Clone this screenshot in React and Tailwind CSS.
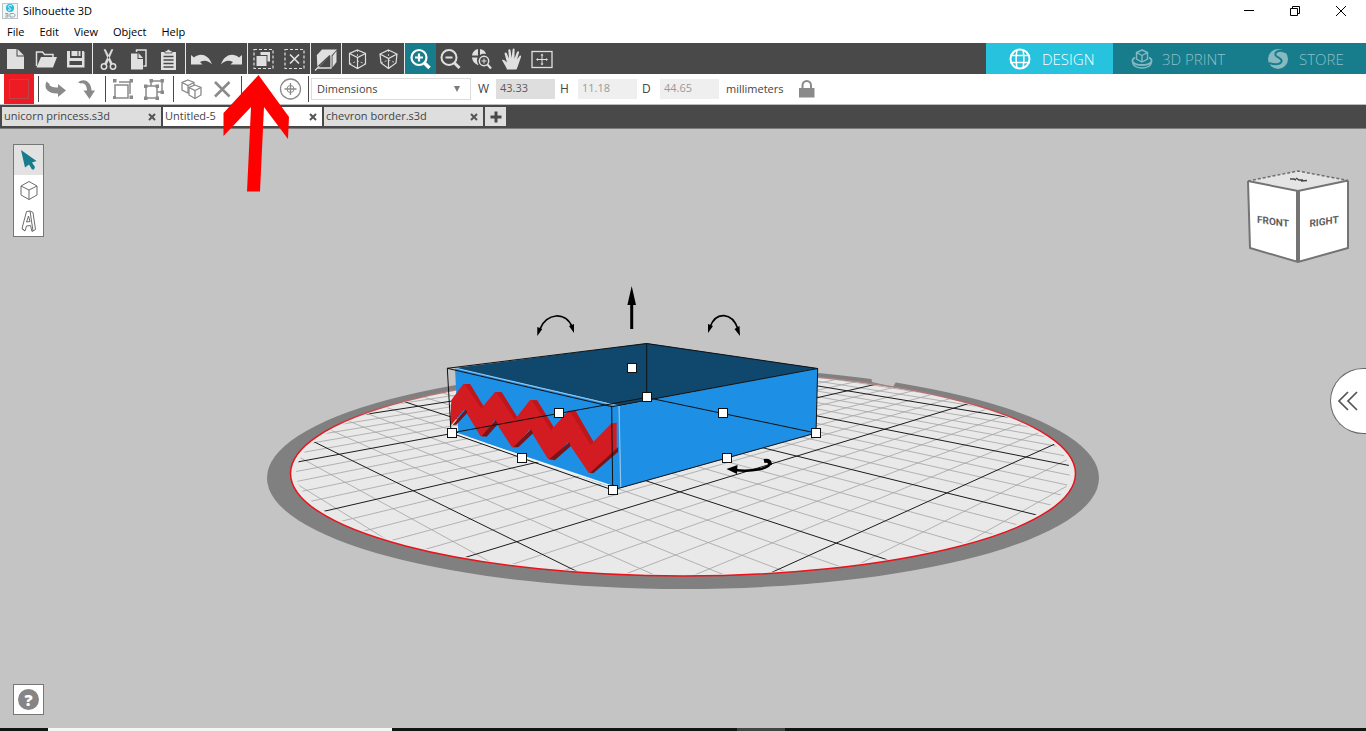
import { useState } from "react";

const LIGHT = "#e0e0e0";
const GREY = "#8a8a8a";

function Icon({ children, color = LIGHT, width = 1 }) {
  return (
    <svg
      viewBox="0 0 31 30"
      className="h-[30px] w-[31px] shrink-0"
      fill="none"
      stroke={color}
      strokeWidth={width}
      aria-hidden="true"
    >
      {children}
    </svg>
  );
}

function NewIcon() {
  return (
    <Icon>
      <path d="M7 5h9.500v7.500H24V25H7z" fill={LIGHT} stroke="none" />
      <path d="M17.500 5l6.500 6.500h-6.500z" fill={LIGHT} stroke="none" />
    </Icon>
  );
}

function OpenIcon() {
  return (
    <Icon>
      <path d="M5.500 22V8h6l2 2.500H22V13" strokeWidth="1.500" />
      <path d="M10 13h16l-4 10.500H5.500z" fill={LIGHT} stroke="none" />
    </Icon>
  );
}

function SaveIcon() {
  return (
    <Icon>
      <path
        d="M6 7h3v7h12V7h1.500L23.500 8v15.500H6zM8.500 17v4h12.500v-4z"
        fill={LIGHT}
        stroke="none"
        fillRule="evenodd"
      />
      <path d="M10.500 7h6v5h-6z" fill={LIGHT} stroke="none" />
      <path d="M17.500 7h2v5h-2z" fill={LIGHT} stroke="none" />
    </Icon>
  );
}

function CutIcon() {
  return (
    <Icon>
      <path d="M11 5.500l1.500 0 7 14-2 1zM20 5.500l-1.500 0-7 14 2 1z" fill={LIGHT} stroke={LIGHT} strokeWidth=".5" />
      <circle cx="11" cy="22.500" r="2.700" strokeWidth="1.500" />
      <circle cx="20" cy="22.500" r="2.700" strokeWidth="1.500" />
    </Icon>
  );
}

function CopyIcon() {
  return (
    <Icon>
      <path d="M12.500 8V6H22v16h-2.500" strokeWidth="1.500" />
      <path d="M7 9.500h6.500V15H19v10.500H7z" fill={LIGHT} stroke="none" />
      <path d="M14.500 9l4.500 5h-4.500z" fill={LIGHT} stroke="none" />
    </Icon>
  );
}

function PasteIcon() {
  return (
    <Icon>
      <path d="M7 8h15v18H7z" fill={LIGHT} stroke="none" />
      <path d="M11 9V6.500h2L14.500 5l1.500 1.500h2V9z" fill={LIGHT} stroke="#494949" strokeWidth=".8" />
      <path d="M9.500 12.500h10M9.500 16h10M9.500 19.500h10M9.500 23h10" stroke="#494949" strokeWidth="1.300" />
    </Icon>
  );
}

function UndoIcon() {
  return (
    <Icon>
      <path d="M5 20.500V11l3 2.500c6-5.500 15-3 18 7-4-4.500-8-4.500-12-2.500l2.500 2.500z" fill={LIGHT} stroke="none" />
    </Icon>
  );
}

function RedoIcon() {
  return (
    <Icon>
      <path d="M26 20.500V11l-3 2.500c-6-5.500-15-3-18 7 4-4.500 8-4.500 12-2.500l-2.500 2.500z" fill={LIGHT} stroke="none" />
    </Icon>
  );
}

function SelectAllIcon() {
  return (
    <Icon>
      <rect x="6" y="5.500" width="19" height="19" strokeDasharray="3 2" strokeWidth="1.200" />
      <path d="M13 8h9v9h-2v-7h-7z" fill={LIGHT} stroke="none" />
      <path d="M12.500 8H22v9.500h-2.500V11h-7z" fill={LIGHT} stroke="none" />
      <path d="M8.500 12h10v10h-10z" fill={LIGHT} stroke="none" />
    </Icon>
  );
}

function DeselectIcon() {
  return (
    <Icon>
      <rect x="6" y="5.500" width="19" height="19" strokeDasharray="3 2" strokeWidth="1.200" />
      <path d="M11 10.500l9 9M20 10.500l-9 9" strokeWidth="1.700" />
    </Icon>
  );
}

function SectionIcon() {
  return (
    <Icon>
      <path d="M6 11l5-5.500h15l-5 5.500z" fill={LIGHT} stroke="none" />
      <path d="M6.500 11.500H20V24H7z" strokeWidth="1.300" />
      <path d="M7 24V12h12z" fill={LIGHT} stroke="none" />
      <path d="M21.500 12L25.500 7v11l-4 5.500z" fill={LIGHT} stroke="none" />
      <path d="M3.500 26L19 11.500" stroke="#494949" strokeWidth="1.500" />
      <path d="M4 26.500l4-4" strokeWidth="1.300" />
    </Icon>
  );
}

function WireCubeIcon() {
  return (
    <Icon width={1.2}>
      <path d="M15.500 6l8 3.500v10.500l-8 4.500-8-4.500V9.500zM7.500 9.500l8 4 8-4M15.500 13.500v11" />
      <path d="M15.500 6v11M7.500 20l8-3 8 3" strokeDasharray="2 2" strokeWidth=".8" />
    </Icon>
  );
}

function PerspectiveCubeIcon() {
  return (
    <Icon width={1.2}>
      <path d="M15.500 6l8.500 4-1 9-7.500 5.500L8 19 7 10zM7 10l8.500 4.500L24 10M15.500 14.500v10" />
      <path d="M15.500 6v10M8 19l7.500-3 7.500 3" strokeDasharray="2 2" strokeWidth=".8" />
    </Icon>
  );
}

function ZoomInIcon() {
  return (
    <Icon color="#ffffff">
      <circle cx="14" cy="13.500" r="7.500" strokeWidth="2.200" />
      <path d="M14 9.500v8M10 13.500h8" strokeWidth="2.200" />
      <path d="M19.500 19l5 5" strokeWidth="3.500" />
    </Icon>
  );
}

function ZoomOutIcon() {
  return (
    <Icon>
      <circle cx="14" cy="13.500" r="7.500" strokeWidth="2" />
      <path d="M10.500 13.500h7" strokeWidth="2" />
      <path d="M19.500 19l5 5" strokeWidth="3" />
    </Icon>
  );
}

function ZoomAreaIcon() {
  return (
    <Icon>
      <path
        d="M12 5v6.500H6c.5-3.500 2.500-6 6-6.500zM14 5c3.500.5 5.500 2.500 6 5-2-.7-4.500-.3-6 1zM6 13.500h5.500c-1 2.500-.5 5 1 7.500-3.500-.7-6-3.500-6.500-7.500z"
        fill={LIGHT}
        stroke="none"
      />
      <circle cx="18" cy="17" r="4.700" strokeWidth="1.500" />
      <path d="M15.500 17h5M18 14.500v5" />
      <path d="M21.500 20.500l3.500 4" strokeWidth="2.200" />
    </Icon>
  );
}

function HandIcon() {
  return (
    <Icon>
      <path
        d="M10 25.500c-1-3.500-4-7-5-9.500 1.500-1 3 .5 5 2.500L7.500 9.500c.5-1.500 2-1.300 2.300 0l2.200 5-.7-8c.2-1.700 2-1.700 2.300 0l1 7.500 1-8.500c.3-1.500 2-1.300 2 0L17.500 14.500 20 8c.8-1.300 2.200-.8 2 .7l-2 6.800 2.500-3.500c1-1 2-.2 1.500 1-1.500 4-3 9-4.500 12.500z"
        fill={LIGHT}
        stroke="none"
      />
    </Icon>
  );
}

function FitIcon() {
  return (
    <Icon>
      <rect x="5" y="7.500" width="20" height="16" strokeWidth="1.300" />
      <path d="M10 15.500h10M15 10.500v10" strokeWidth="1" />
      <path d="M9 15.500l2-1.500v3zM21 15.500l-2-1.500v3zM15 9.500l-1.500 2h3zM15 21.500l-1.500-2h3z" fill={LIGHT} stroke="none" />
    </Icon>
  );
}

const toolGroups = [
  {
    width: "w-[92px]",
    tools: [["New", NewIcon], ["Open", OpenIcon], ["Save", SaveIcon]],
  },
  {
    width: "w-[93px]",
    tools: [["Cut", CutIcon], ["Copy", CopyIcon], ["Paste", PasteIcon]],
  },
  { width: "w-[62px]", tools: [["Undo", UndoIcon], ["Redo", RedoIcon]] },
  {
    width: "w-[63px]",
    tools: [["Select all", SelectAllIcon], ["Deselect", DeselectIcon]],
  },
  { width: "w-[31px]", tools: [["Section view", SectionIcon]] },
  {
    width: "w-[63px]",
    tools: [["Wireframe", WireCubeIcon], ["Perspective", PerspectiveCubeIcon]],
  },
  {
    width: "w-[154px]",
    tools: [
      ["Zoom in", ZoomInIcon],
      ["Zoom out", ZoomOutIcon],
      ["Zoom area", ZoomAreaIcon],
      ["Pan", HandIcon],
      ["Fit to window", FitIcon],
    ],
  },
];

function TitleBar() {
  return (
    <header className="flex h-[22px] items-center pr-[2px] pl-[2px] text-black">
      <svg viewBox="0 0 16 16" className="size-4" aria-hidden="true">
        <rect x=".5" y=".5" width="15" height="15" fill="#f2f6f7" stroke="#b9c4c8" />
        <circle cx="8" cy="5" r="4" fill="#25bcd8" />
        <path d="M10 3c-3-1.500-5 .5-2.500 2s1 2.500-1.500 2" stroke="#fff" fill="none" />
        <path d="M3 10.500h3v3.500H3M3.500 12.200H6M8 10.500h3.500l1.500 1v1.500l-1.500 1H8z" stroke="#9aa3a6" fill="none" />
      </svg>
      <h1 className="ml-[5px] flex-1 text-[11px]">Silhouette 3D</h1>
      <button aria-label="Minimize" className="flex h-full w-[46px] items-center justify-center">
        <svg viewBox="0 0 10 10" className="size-[10px]" stroke="#000">
          <path d="M0 4.500h10" />
        </svg>
      </button>
      <button aria-label="Restore" className="flex h-full w-[46px] items-center justify-center">
        <svg viewBox="0 0 10 10" className="size-[10px]" stroke="#000" fill="none">
          <path d="M.5 2.500h7v7h-7zM2.500 2.500v-2h7v7h-2" />
        </svg>
      </button>
      <button aria-label="Close" className="flex h-full w-[46px] items-center justify-center">
        <svg viewBox="0 0 10 10" className="size-[10px]" stroke="#000">
          <path d="M0 0l10 10M10 0L0 10" />
        </svg>
      </button>
    </header>
  );
}

function MenuBar() {
  return (
    <nav className="flex h-[21px] items-center gap-[15px] pl-[7px] text-[11px] text-black">
      {["File", "Edit", "View", "Object", "Help"].map((item) => (
        <button key={item}>{item}</button>
      ))}
    </nav>
  );
}

function ModeTabs() {
  return (
    <div className="flex text-[15px] text-[#8fbfc6]">
      <button className="flex w-[127px] items-center bg-[#26c2de] pt-px pl-[22px] text-white">
        <svg viewBox="0 0 24 24" className="mr-[10px] size-6" fill="none" stroke="#fff" aria-hidden="true">
          <circle cx="12" cy="12" r="9.500" strokeWidth="2" />
          <path d="M2.500 8.500h19M2.500 15.500h19M9 3c-1.200 6-1.200 12 0 18M15 3c1.200 6 1.200 12 0 18" strokeWidth="1.500" />
        </svg>
        <span className="font-light">DESIGN</span>
      </button>
      <button className="flex w-[134px] items-center bg-[#177d8c] pt-px pl-[17px]">
        <svg viewBox="0 0 24 24" className="mr-[8px] size-6" fill="none" stroke="#86b9c0" aria-hidden="true">
          <path d="M12 3l5.500 2.500v6.500L12 15l-5.500-3V5.500zM6.500 5.500l5.500 3 5.500-3M12 8.500V15" strokeWidth="1.400" />
          <path d="M5 10.500C-.5 13.500 3 18 12 18s12.500-4.500 7-7.500" strokeWidth="1.800" />
          <path d="M2.500 16c1.500 3.500 5 5 9.500 5s8-1.500 9.500-5" strokeWidth="1.500" />
        </svg>
        <span className="font-light">3D PRINT</span>
      </button>
      <button className="flex w-[119px] items-center bg-[#177d8c] pt-px pl-[19px]">
        <svg viewBox="0 0 24 24" className="mr-[9px] size-6" fill="none" aria-hidden="true">
          <circle cx="12" cy="12" r="10" fill="#86b9c0" />
          <path d="M20 5.500C15 2 8.500 4 9.500 8c1 3 7 2.500 6 6.500-1 3-6.500 3.500-12.500 1.500" stroke="#177d8c" strokeWidth="2" />
        </svg>
        <span className="font-light">STORE</span>
      </button>
    </div>
  );
}

function Toolbar() {
  return (
    <div className="flex h-[31px] items-stretch bg-[#494949]">
      {toolGroups.map((group, i) => (
        <div
          key={i}
          className={`flex shrink-0 ${group.width} ${i > 0 ? "border-l border-[#e8e8e8]" : ""}`}
        >
          {group.tools.map(([label, ToolIcon]) => (
            <button
              key={label}
              aria-label={label}
              className={`flex min-w-0 flex-1 items-center justify-center ${
                label === "Zoom in" ? "bg-[#177d8c]" : ""
              }`}
            >
              <ToolIcon />
            </button>
          ))}
        </div>
      ))}
      <div className="flex-1" />
      <ModeTabs />
    </div>
  );
}

function Separator() {
  return <span className="h-[26px] w-px shrink-0 bg-[#494949]" />;
}

function DimensionField({ label, value, disabled }) {
  return (
    <label className="flex items-center gap-2">
      <span className="w-[10px] text-xs">{label}</span>
      <input
        defaultValue={value}
        disabled={disabled}
        className={`h-5 w-[59px] pb-1 pl-1 ${
          disabled ? "bg-[#efefef] text-[#9a9a9a]" : "bg-[#dedede] text-[#5a5a5a]"
        }`}
      />
    </label>
  );
}

function OptionsBar() {
  return (
    <div className="flex h-[30px] items-center bg-white text-[11px] text-[#444]">
      <button aria-label="Fill color" className="ml-1 flex size-[30px] items-center justify-center bg-[#ed1c24]">
        <span className="size-[20px] border border-[#b3474c]" />
      </button>
      <div className="ml-1 flex w-[67px] items-center">
        <Separator />
        <button aria-label="Rotate horizontally" className="ml-px">
          <Icon color={GREY}>
            <path d="M6.500 7.500l3 2.500c-.5 2 3 3.500 8.500 3.500V10l8 6.500-8 6.500v-3.500C9 20 3 15 6.500 7.500z" fill={GREY} stroke="none" />
          </Icon>
        </button>
        <button aria-label="Rotate vertically">
          <Icon color={GREY}>
            <path d="M7 8.500C13 3 20.500 8 20.500 16.500H24L18.500 25 12.500 16.500H16c0-5-3-8.500-6-7z" fill={GREY} stroke="none" />
          </Icon>
        </button>
      </div>
      <div className="flex w-[68px] items-center">
        <Separator />
        <button aria-label="Group" className="ml-[2px]">
          <Icon color={GREY}>
            <path d="M7 11v13h13V11zM11 8h11v12" strokeWidth="1.500" />
            <path d="M5 5h3.500v3.500H5zM21.500 5H25v3.500h-3.500zM21.500 21.500H25V25h-3.500zM5 22h3v3H5z" fill={GREY} stroke="none" />
          </Icon>
        </button>
        <button aria-label="Ungroup">
          <Icon color={GREY}>
            <path d="M7 12v12h11V12zM12 12V7h11v11h-5" strokeWidth="1.500" />
            <path
              d="M5 10.500h3.500V14H5zM16.500 10.500H20V14h-3.500zM5 22.500h3.500V26H5zM16.500 22.500H20V26h-3.500zM10.500 5H14v3.500h-3.500zM21.500 5H25v3.500h-3.500zM21.500 16.500H25V20h-3.500z"
              fill={GREY}
              stroke="none"
            />
          </Icon>
        </button>
      </div>
      <div className="flex w-[68px] items-center">
        <Separator />
        <button aria-label="Duplicate" className="ml-[2px]">
          <Icon color={GREY} width={1.3}>
            <path d="M12 6l6 2.500v7.500l-6 3-6-3V8.500zM6 8.500l6 3 6-3M12 11.500V19" />
            <path d="M19 11l6 2.500V21l-6 3.500-6-3.500v-7.500z" fill="#fff" />
            <path d="M13 13.500l6 3 6-3M19 16.500v8" />
          </Icon>
        </button>
        <button aria-label="Delete">
          <Icon color={GREY}>
            <path d="M8 8l14.500 14.500M22.500 8L8 22.500" strokeWidth="2.500" />
          </Icon>
        </button>
      </div>
      <div className="flex w-[67px] items-center justify-between">
        <Separator />
        <button aria-label="Center on platform" className="mr-[2px]">
          <Icon color={GREY}>
            <circle cx="15.500" cy="15" r="10" strokeWidth="1.300" />
            <circle cx="15.500" cy="15" r="3.500" strokeWidth="1" />
            <path d="M15.500 9v12M9.500 15h12" strokeWidth="1.300" />
          </Icon>
        </button>
      </div>
      <Separator />
      <div className="relative ml-[2px]">
        <select
          aria-label="Transform mode"
          className="block h-[22px] w-[160px] appearance-none border border-[#dcdcdc] bg-white pt-px pl-[5px] text-[#444]"
        >
          <option>Dimensions</option>
        </select>
        <svg viewBox="0 0 8 8" className="pointer-events-none absolute top-[7px] right-[10px] size-2" aria-hidden="true">
          <path d="M1 1h6L4 7z" fill="#7a7a7a" />
        </svg>
      </div>
      <div className="ml-[7px] flex gap-[5px]">
        <DimensionField label="W" value="43.33" />
        <DimensionField label="H" value="11.18" disabled />
        <DimensionField label="D" value="44.65" disabled />
      </div>
      <span className="ml-[7px]">millimeters</span>
      <button aria-label="Lock aspect ratio" className="ml-[14px]">
        <svg viewBox="0 0 18 20" className="h-5 w-[18px]" aria-hidden="true">
          <path d="M4.500 9V6.500a4.200 4.500 0 0 1 8.500 0V9" fill="none" stroke={GREY} strokeWidth="2" />
          <path d="M1 9h15.500v9.500H1z" fill={GREY} />
        </svg>
      </button>
    </div>
  );
}

const documents = ["unicorn princess.s3d", "Untitled-5", "chevron border.s3d"];

function DocumentTabs({ active, onSelect }) {
  return (
    <div className="flex h-[25px] items-center gap-[2px] border-t border-b border-t-[#bdbdbd] border-b-[#7d7d7d] bg-[#494949] pl-[2px] text-[11px] text-[#444]">
      {documents.map((name) => (
        <div
          key={name}
          className={`flex h-[19px] w-[159px] items-center pr-[5px] pl-[2px] ${
            name === active ? "bg-white" : "bg-[#dedede]"
          }`}
        >
          <button className="flex-1 text-left" onClick={() => onSelect(name)}>
            {name}
          </button>
          <button aria-label={`Close ${name}`}>
            <svg viewBox="0 0 8 8" className="size-2" stroke="#555" strokeWidth="2" aria-hidden="true">
              <path d="M1 1l6 6M7 1L1 7" />
            </svg>
          </button>
        </div>
      ))}
      <button aria-label="New document" className="flex h-[19px] w-[21px] items-center justify-center bg-[#dedede]">
        <svg viewBox="0 0 12 12" className="size-3" stroke="#494949" strokeWidth="3" aria-hidden="true">
          <path d="M6 .5v11M.5 6h11" />
        </svg>
      </button>
    </div>
  );
}

// projects a point of the build plate grid (in major cells) to the scene
function project(u, v) {
  const w = 1 + 0.197 * u - 0.1986 * v;
  const x = (516.7 + 296.95 * u + 21.3 * v) / w;
  const y = (541.7 + 47.05 * u - 46.5 * v) / w;
  return `${x.toFixed(1)} ${y.toFixed(1)}`;
}

const minorLines = [];
const majorLines = [];
for (let n = -5; n <= 40; n++) {
  const d = `M${project(n / 5, -9)}L${project(n / 5, 2)}`;
  (n % 5 === 0 ? majorLines : minorLines).push(d);
}
for (let n = -40; n <= 10; n++) {
  const d = `M${project(-1, n / 5)}L${project(9, n / 5)}`;
  (n % 5 === 0 ? majorLines : minorLines).push(d);
}

const handles = [
  [632, 368],
  [647, 397],
  [559, 413],
  [723, 413],
  [452, 433],
  [816, 433],
  [522, 458],
  [727, 458],
  [613, 490],
];

function Scene() {
  return (
    <svg viewBox="0 129 1366 599" className="h-full w-full" role="img" aria-label="Build platform">
      <defs>
        <clipPath id="plate">
          <ellipse cx="683" cy="473" rx="387" ry="101.500" />
        </clipPath>
        <linearGradient id="rim" x1="0" y1="0" x2="0" y2="1">
          <stop offset="0" stopColor="#a88c8c" />
          <stop offset=".12" stopColor="#b07474" />
          <stop offset=".3" stopColor="#e8131b" />
          <stop offset="1" stopColor="#e8131b" />
        </linearGradient>
      </defs>
      <ellipse cx="683" cy="478" rx="416" ry="111" fill="#808080" />
      <path d="M871 376l26 4-4 7-21-5z" fill="#c4c4c4" />
      <ellipse cx="683" cy="473.500" rx="392.500" ry="102.500" fill="#e9e9e9" stroke="url(#rim)" strokeWidth="1.500" />
      <g clipPath="url(#plate)" fill="none">
        <path d={minorLines.join("")} stroke="#a3a3a3" strokeWidth=".8" />
        <path d={majorLines.join("")} stroke="#1c1c1c" strokeWidth="1" />
      </g>

      {/* box */}
      <path d="M455 368L646.700 343.300 817.700 368.300 619.300 406 611.700 404z" fill="#0f476d" />
      <path d="M455 368l164.300 38 1.400 82-7 0L458.300 433z" fill="#1d8fe4" />
      <path d="M619.300 406l198.400-37.700L816 433l-195.300 55z" fill="#1d8fe4" />
      <path d="M455 368l157 36.500 7 1.500 1.700 81" stroke="#8cc6f1" strokeWidth="1.200" fill="none" />
      <path d="M456 434l157 52.500" stroke="#f4f4f4" strokeWidth="1.500" />

      {/* chevron border on the front face */}
      <g transform="translate(430 270) scale(.33333)">
        <path
          d="M64 390l36-48h20l40 66 35-42 20 1 46 73 39-50 21 1 50 81 44-50 22 2 53 91 55-55 15-2v87l-77 65-7-2-62-91-48 53-12-3-55-89-45 54h-8l-53-82-32 50-10-2-48-80-39 47-4-5z"
          fill="#d31c22"
        />
        <path
          d="M68 465l39-47 5 10-33 36zM155 498l42-48 7 12-34 38zM250 532l53-54 6 12-44 42zM358 567l60-50 4 12-48 42zM480 608l84-76v14l-74 64z"
          fill="#791419"
        />
        <path
          d="M104 343l16-1 40 66-6 8zM199 367h16l46 73-7 9zM305 391h16l50 81-8 9zM420 424l17 0 53 91-8 10z"
          fill="#bf161c"
        />
      </g>

      {/* bounding wires */}
      <g fill="none" stroke="#111" strokeWidth="1">
        <path d="M447.300 368.300L646.700 343.500 817.700 368.500 612 406.700z" />
        <path d="M451 433L646.700 397.500 816 433 612.700 490z" />
        <path d="M447.300 368.300L451 433M646.700 343.500v54M817.700 368.500L816 433M611.700 406.700l1 83.300" />
      </g>

      {/* rotate and lift arrows */}
      <g fill="none" stroke="#000" strokeWidth="1.700">
        <path d="M540 329c6-16 26-18 32-2" />
        <path d="M710 327c6-16 22-15 28 2" />
        <path d="M631.700 329v-26" strokeWidth="3" />
        <path d="M735 470c14 2 40-1 34-9" strokeWidth="2.500" />
        <path d="M770 465c0-3-1-5-6-4" strokeWidth="4" />
      </g>
      <path
        d="M537.300 336v-9l5 2zM574 333l-5-7 5-2zM708 333l0-9 5 2zM740 336l-5.500-7 5-3zM631.700 286l4.300 19h-8.600zM726.500 469l11-4-.5 9z"
        fill="#000"
      />

      {handles.map(([x, y]) => (
        <rect key={`${x}-${y}`} x={x - 4.5} y={y - 4.5} width="9" height="9" fill="#fff" stroke="#111" />
      ))}
    </svg>
  );
}

function ViewCube() {
  return (
    <svg
      viewBox="0 0 104 95"
      className="absolute top-10 right-4 h-[95px] w-[104px]"
      fontFamily="Roboto, sans-serif"
      fontWeight="700"
      fontSize="10"
      textAnchor="middle"
    >
      <path d="M2 12L52 2l50 9.500L52 22z" fill="#e4e4e4" />
      <path d="M2 12l50 10v71L4 79z" fill="#fff" />
      <path d="M52 22l50-10.500V79L52 93z" fill="#fff" />
      <path d="M2 12L52 2l50 9.500" fill="none" stroke="#6e6e6e" strokeWidth="1.500" strokeDasharray="3 2" />
      <path d="M2 12l50 10 50-10.500M2 12l2 67 48 14 50-14V11.500" fill="none" stroke="#747474" strokeWidth="2" />
      <path d="M52 22v71" stroke="#747474" strokeWidth="4" />
      <path d="M44 10h4l2 1M50 9l3 2h4M55 12l6-.5" fill="none" stroke="#444" strokeWidth="1.500" />
      <text transform="translate(27 56) skewY(8)" fill="#5f5f5f">
        FRONT
      </text>
      <text transform="translate(78 56) skewY(-8)" fill="#5f5f5f">
        RIGHT
      </text>
    </svg>
  );
}

function SideTools() {
  return (
    <div className="absolute top-[15px] left-[13px] flex flex-col border border-[#777] bg-white">
      <button aria-label="Select" className="bg-[#e2e2e2]">
        <svg viewBox="0 0 29 30" className="h-[30px] w-[29px]" aria-hidden="true">
          <path d="M7 5l15.500 11-4.500 1.500 3 4.500-1 2.500h-2l-3-5-4 3z" fill="#177d8c" />
        </svg>
      </button>
      <button aria-label="Add shape">
        <svg viewBox="0 0 29 31" className="h-[31px] w-[29px]" fill="none" stroke="#6b6b6b" aria-hidden="true">
          <path d="M15 6.500l8 4.500v9l-8 4.500L7 20v-9zM7 11l8 4 8-4M15 15v9.500" />
        </svg>
      </button>
      <button aria-label="Add text">
        <svg viewBox="0 0 29 30" className="h-[30px] w-[29px]" fill="none" stroke="#6b6b6b" aria-hidden="true">
          <path d="M8 22.500L12.500 5.500 16 5l3 1.500 2.500 17-3.500 2-1.500-6-4 .5-1.500 5zM12.500 16l2-6 1.500 5.500zM16 5l3 20M11 25l-3-2.500" />
        </svg>
      </button>
    </div>
  );
}

function Viewport() {
  return (
    <main className="relative min-h-0 flex-1 overflow-hidden bg-[#c4c4c4]">
      <Scene />
      <SideTools />
      <ViewCube />
      <button
        aria-label="Expand panel"
        className="absolute top-[239px] right-0 flex h-[66px] w-9 items-center justify-center rounded-l-full border border-r-0 border-[#666] bg-white pr-[2px]"
      >
        <svg viewBox="0 0 20 20" className="size-5" fill="none" stroke="#555" strokeWidth="1.700" aria-hidden="true">
          <path d="M10 1L1 10l9 9M19 1l-9 9 9 9" />
        </svg>
      </button>
      <button
        aria-label="Help"
        className="absolute bottom-[13px] left-[13px] flex size-[31px] items-center justify-center border border-[#777] bg-white"
      >
        <span className="flex size-[21px] items-center justify-center rounded-full bg-[#858585] text-base font-extrabold text-white">
          ?
        </span>
      </button>
    </main>
  );
}

function PointerArrow() {
  return (
    <svg
      viewBox="0 0 67 118"
      className="pointer-events-none absolute top-[75px] left-[223px] h-[118px] w-[67px]"
      aria-hidden="true"
    >
      <path d="M35.500 0L66 42l-1 22-24-32-4 84.500H24L28 32 .5 61V38z" fill="#fe0000" />
    </svg>
  );
}

export default function App() {
  const [active, setActive] = useState("Untitled-5");

  return (
    <div className="relative flex h-screen flex-col overflow-hidden bg-white font-['Open_Sans','Noto_Sans',sans-serif]">
      <TitleBar />
      <MenuBar />
      <Toolbar />
      <OptionsBar />
      <DocumentTabs active={active} onSelect={setActive} />
      <Viewport />
      <footer className="flex h-[3px] bg-[#141414]">
        <span className="ml-12 w-[344px] bg-[#f5f5f5]" />
        <span className="ml-[345px] w-12 bg-[#444]" />
      </footer>
      <PointerArrow />
    </div>
  );
}
